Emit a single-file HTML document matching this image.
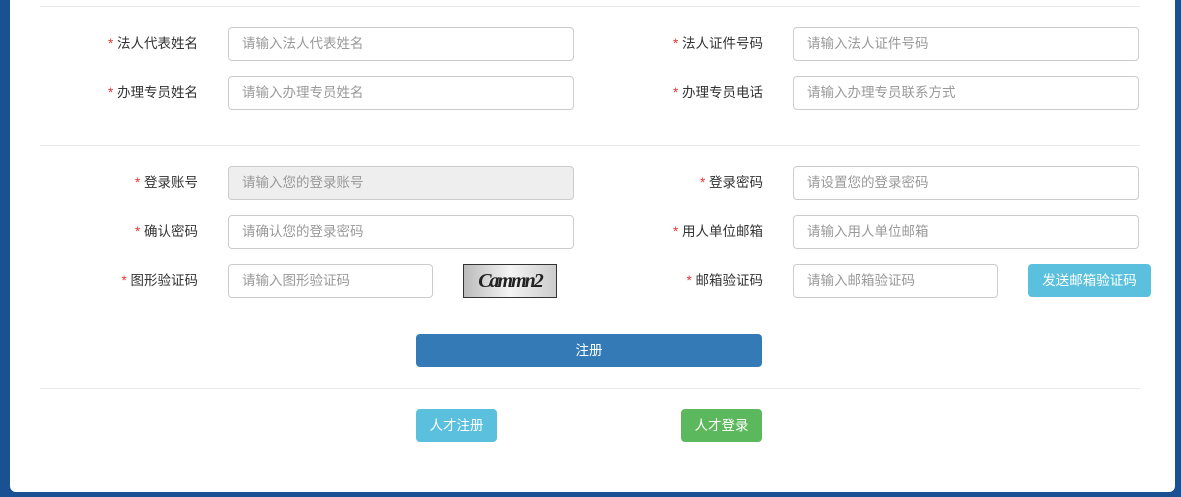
<!DOCTYPE html>
<html><head><meta charset="utf-8"><style>
body{margin:0;width:1181px;height:497px;background:#1a5192;position:relative;overflow:hidden;font-family:"Liberation Sans","Noto Sans CJK SC",sans-serif;font-size:13.5px}
.card{position:absolute;left:10px;top:-10px;width:1165px;height:502px;background:#fff;border-radius:6px}
.hr{position:absolute;left:40px;width:1100px;height:1px;background:#eaeaea}
.in{position:absolute;height:32px;border:1px solid #ccc;border-radius:4px;box-sizing:content-box;color:#999;line-height:32px;padding-left:13px;background:#fff}
.lab{position:absolute;width:180px;text-align:right;color:#333;line-height:34px}
.lab b{color:#e33;font-weight:normal}
.btn{position:absolute;color:#fff;text-align:center;border-radius:4px;line-height:33px;height:33px}
</style></head><body>
<div class="card"></div>
<div class="hr" style="top:6px"></div>
<div class="hr" style="top:145px"></div>
<div class="hr" style="top:388px"></div>

<div class="lab" style="left:18px;top:27px"><b>*</b> 法人代表姓名</div>
<div class="in" style="left:228px;top:27px;width:331px">请输入法人代表姓名</div>
<div class="lab" style="left:583px;top:27px"><b>*</b> 法人证件号码</div>
<div class="in" style="left:793px;top:27px;width:331px">请输入法人证件号码</div>

<div class="lab" style="left:18px;top:76px"><b>*</b> 办理专员姓名</div>
<div class="in" style="left:228px;top:76px;width:331px">请输入办理专员姓名</div>
<div class="lab" style="left:583px;top:76px"><b>*</b> 办理专员电话</div>
<div class="in" style="left:793px;top:76px;width:331px">请输入办理专员联系方式</div>

<div class="lab" style="left:18px;top:166px"><b>*</b> 登录账号</div>
<div class="in" style="left:228px;top:166px;width:331px;background:#eee">请输入您的登录账号</div>
<div class="lab" style="left:583px;top:166px"><b>*</b> 登录密码</div>
<div class="in" style="left:793px;top:166px;width:331px">请设置您的登录密码</div>

<div class="lab" style="left:18px;top:215px"><b>*</b> 确认密码</div>
<div class="in" style="left:228px;top:215px;width:331px">请确认您的登录密码</div>
<div class="lab" style="left:583px;top:215px"><b>*</b> 用人单位邮箱</div>
<div class="in" style="left:793px;top:215px;width:331px">请输入用人单位邮箱</div>

<div class="lab" style="left:18px;top:264px"><b>*</b> 图形验证码</div>
<div class="in" style="left:228px;top:264px;width:190px">请输入图形验证码</div>
<div style="position:absolute;left:463px;top:264px;width:94px;height:34px;border:1px solid #333;box-sizing:border-box;background:linear-gradient(90deg,#bbb,#f4f4f4 50%,#ccc);font:bold italic 20px 'Liberation Serif',serif;color:#222;text-align:center;line-height:32px;letter-spacing:-2px">Cammn2</div>
<div class="lab" style="left:583px;top:264px"><b>*</b> 邮箱验证码</div>
<div class="in" style="left:793px;top:264px;width:190px">请输入邮箱验证码</div>
<div class="btn" style="left:1028px;top:264px;width:123px;background:#5bc0de">发送邮箱验证码</div>

<div class="btn" style="left:416px;top:334px;width:346px;background:#337ab7">注册</div>
<div class="btn" style="left:416px;top:409px;width:81px;background:#5bc0de">人才注册</div>
<div class="btn" style="left:681px;top:409px;width:81px;background:#5cb85c">人才登录</div>
</body></html>
